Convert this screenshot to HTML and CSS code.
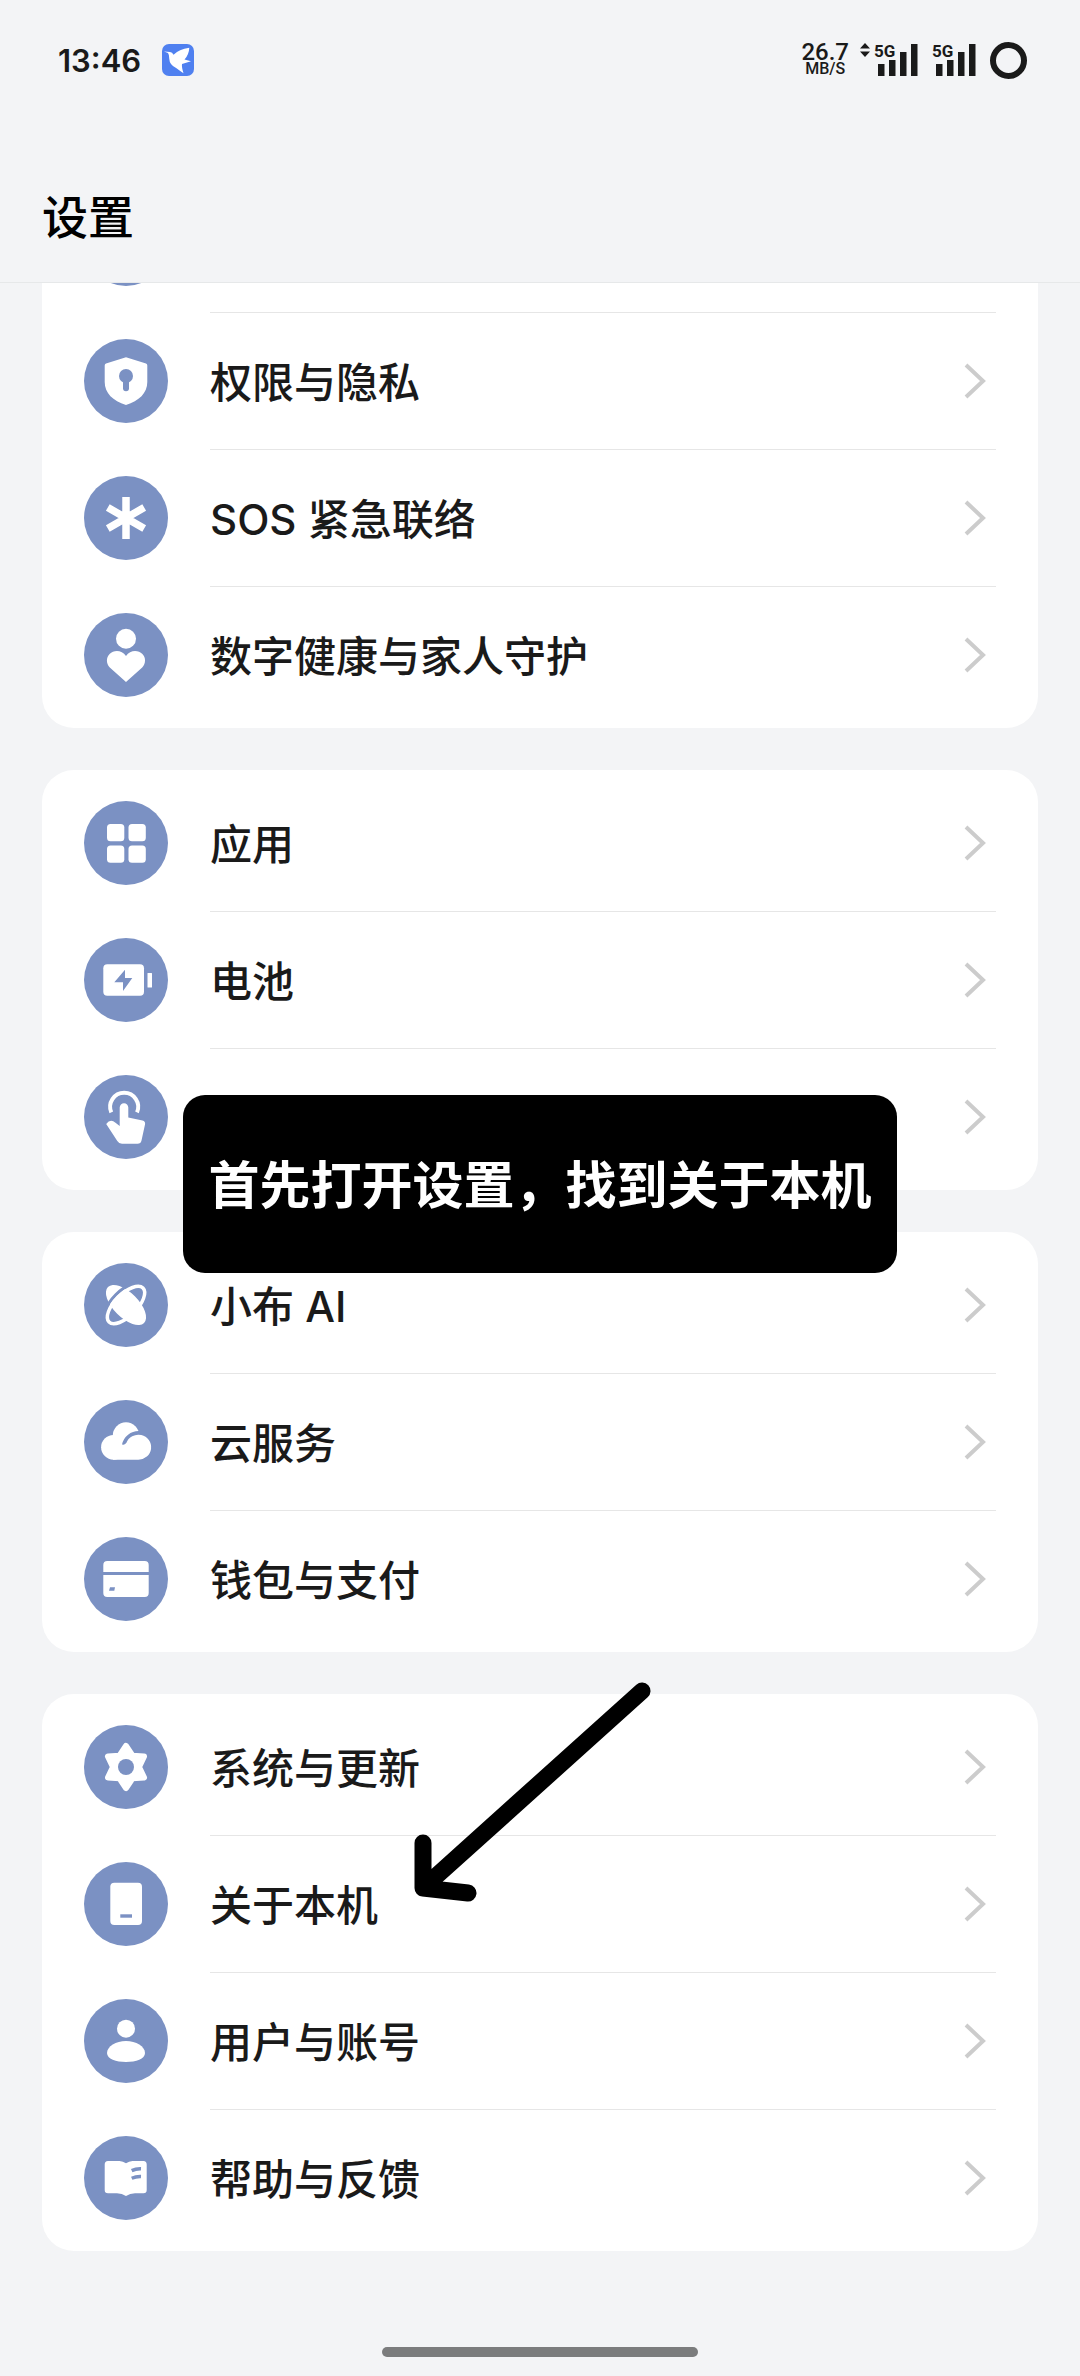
FILE: index.html
```html
<!DOCTYPE html>
<html lang="zh-CN">
<head>
    <meta charset="UTF-8">
    <meta name="viewport" content="width=device-width, initial-scale=1.0">
    <title>设置</title>
    <link rel="stylesheet" href="styles.css">
</head>
<body>
    <header class="header">
        <div class="status-bar">
            <div class="status-left">
                <span class="clock">13:46</span>
                <svg class="app-badge" viewBox="0 0 32 32">
                    <rect width="32" height="32" rx="7" fill="#4f80f0"/>
                    <path d="M2 7.4 8 8q2.4 0 3.5 2.8Q17 5 27.3 3.7 27 10.5 22.5 15.5L29 17.3 20 20Q19.5 23 21.5 29.3 18 27 14.5 24.3 7.5 21 7.3 15 7.3 10.5 6 9Z" fill="#fff"/>
                </svg>
            </div>
            <div class="status-right">
                <div class="speed">
                    <span class="speed-value">26.7</span>
                    <span class="speed-unit">MB/S</span>
                </div>
                <svg class="traffic" viewBox="0 0 10 14">
                    <path d="M5 0 10 5.5H0ZM5 14 0 8.5H10Z"/>
                </svg>
                <div class="signal">
                    <span class="signal-type">5G</span>
                    <svg class="signal-bars" viewBox="0 0 40 32">
                        <path d="M0 20h6.5v12H0zM11 16h6.5v16H11zM22 8h6.5v24H22zM33 0h6.5v32H33z"/>
                    </svg>
                </div>
                <div class="signal">
                    <span class="signal-type">5G</span>
                    <svg class="signal-bars" viewBox="0 0 40 32">
                        <path d="M0 20h6.5v12H0zM11 16h6.5v16H11zM22 8h6.5v24H22zM33 0h6.5v32H33z"/>
                    </svg>
                </div>
                <div class="battery-ring"></div>
            </div>
        </div>
        <h1 class="title">设置</h1>
    </header>

    <main class="list">
        <ul class="card">
            <li><a class="row" href="#">
                <span class="icon"></span>
                <span class="row-body"></span>
            </a></li>
            <li><a class="row" href="#">
                <svg class="icon" viewBox="0 0 84 84">
                    <path d="M42 18.3 62 24.6q1.3.4 1.3 1.8V43C63.3 54 55 62 42 66 29 62 20.7 54 20.7 43V26.4q0-1.4 1.3-1.8Z"/>
                    <circle class="cut" cx="42" cy="37" r="7"/>
                    <path class="cut-line" d="M42 40v9.2" stroke-width="6" stroke-linecap="round"/>
                </svg>
                <span class="row-body">权限与隐私 <svg class="chevron" viewBox="0 0 42 42"><path d="M12 5 29 21 12 37"/></svg></span>
            </a></li>
            <li><a class="row" href="#">
                <svg class="icon" viewBox="0 0 84 84">
                    <path class="line" stroke-width="7.5" d="M42 21v42M23.8 31.5l36.4 21M60.2 31.5l-36.4 21"/>
                </svg>
                <span class="row-body">SOS 紧急联络 <svg class="chevron" viewBox="0 0 42 42"><path d="M12 5 29 21 12 37"/></svg></span>
            </a></li>
            <li><a class="row" href="#">
                <svg class="icon" viewBox="0 0 84 84">
                    <circle cx="42" cy="25.7" r="10"/>
                    <path d="M42 69 25.8 54.5C22 50.5 22 44.5 25.6 41 30 36.6 38 37 42 43 46 37 54 36.6 58.4 41 62 44.5 62 50.5 58.2 54.5Z"/>
                </svg>
                <span class="row-body">数字健康与家人守护 <svg class="chevron" viewBox="0 0 42 42"><path d="M12 5 29 21 12 37"/></svg></span>
            </a></li>
        </ul>

        <ul class="card">
            <li><a class="row" href="#">
                <svg class="icon" viewBox="0 0 84 84">
                    <rect x="23" y="23" width="17.3" height="17.3" rx="3.5"/>
                    <rect x="44.5" y="23" width="17.3" height="17.3" rx="3.5"/>
                    <rect x="23" y="44.5" width="17.3" height="17.3" rx="3.5"/>
                    <rect x="44.5" y="44.5" width="17.3" height="17.3" rx="3.5"/>
                </svg>
                <span class="row-body">应用 <svg class="chevron" viewBox="0 0 42 42"><path d="M12 5 29 21 12 37"/></svg></span>
            </a></li>
            <li><a class="row" href="#">
                <svg class="icon" viewBox="0 0 84 84">
                    <rect x="19.3" y="26.3" width="40.7" height="31.4" rx="4"/>
                    <rect x="63.5" y="35" width="4.5" height="14.5" rx=".5"/>
                    <path class="cut" d="M41 31.7 30.3 44.3H39V53L48.3 40H41Z"/>
                </svg>
                <span class="row-body">电池 <svg class="chevron" viewBox="0 0 42 42"><path d="M12 5 29 21 12 37"/></svg></span>
            </a></li>
            <li><a class="row" href="#">
                <svg class="icon" viewBox="0 0 84 84">
                    <path class="line" stroke-width="4" d="M27.3 37.4A14 14 0 1 1 53 37.4"/>
                    <path d="M35.7 32.5a4.3 4.3 0 0 1 8.6 0V42.5L58.5 45.4Q61.7 46.2 61 49.5L57.5 65.5Q56.8 68.7 53.5 68.7H38Q34.8 68.7 33.3 66L22.2 49Q26.5 43 31.5 47.8L35.7 51Z"/>
                </svg>
                <span class="row-body"><svg class="chevron" viewBox="0 0 42 42"><path d="M12 5 29 21 12 37"/></svg></span>
            </a></li>
        </ul>

        <ul class="card">
            <li><a class="row" href="#">
                <svg class="icon" viewBox="0 0 84 84">
                    <g transform="rotate(45 42 42)">
                        <ellipse cx="42" cy="42" rx="25.5" ry="12.5"/>
                        <path class="cut-line" stroke-width="3" d="M42 15A14.5 27 0 0 0 42 69"/>
                        <ellipse class="line" cx="42" cy="42" rx="11" ry="24" stroke-width="3.5"/>
                    </g>
                </svg>
                <span class="row-body">小布 AI <svg class="chevron" viewBox="0 0 42 42"><path d="M12 5 29 21 12 37"/></svg></span>
            </a></li>
            <li><a class="row" href="#">
                <svg class="icon" viewBox="0 0 84 84">
                    <circle cx="42" cy="35.5" r="13.2"/>
                    <circle cx="29.5" cy="47.3" r="12.4"/>
                    <path class="cut" d="M38 44.5A17 17 0 0 1 55 31h5v14H41.5Q38.5 47 38 44.5Z"/>
                    <path d="M29 59.7V47L38.5 44.5Q40 45.5 42.3 43A12.8 12.5 0 1 1 54.3 59.7Z"/>
                </svg>
                <span class="row-body">云服务 <svg class="chevron" viewBox="0 0 42 42"><path d="M12 5 29 21 12 37"/></svg></span>
            </a></li>
            <li><a class="row" href="#">
                <svg class="icon" viewBox="0 0 84 84">
                    <path d="M19.3 35V28q0-4 4-4H60.7q4 0 4 4V35ZM19.3 38H64.7V56q0 4-4 4H23.3q-4 0-4-4Z"/>
                    <path class="cut" d="M26 50.3H31L30.3 53.7H25Z"/>
                </svg>
                <span class="row-body">钱包与支付 <svg class="chevron" viewBox="0 0 42 42"><path d="M12 5 29 21 12 37"/></svg></span>
            </a></li>
        </ul>

        <ul class="card">
            <li><a class="row" href="#">
                <svg class="icon" viewBox="0 0 84 84">
                    <path stroke="#fff" stroke-width="6" stroke-linejoin="round" d="M42 21 48.5 30.7 60 31.5 55 42 60 52.5 48.5 53.3 42 63 35.5 53.3 24 52.5 29 42 24 31.5 35.5 30.7Z"/>
                    <circle class="cut" cx="42" cy="42" r="8"/>
                </svg>
                <span class="row-body">系统与更新 <svg class="chevron" viewBox="0 0 42 42"><path d="M12 5 29 21 12 37"/></svg></span>
            </a></li>
            <li><a class="row" href="#">
                <svg class="icon" viewBox="0 0 84 84">
                    <rect x="26.3" y="20.7" width="31.7" height="42.3" rx="4"/>
                    <rect class="cut" x="36.3" y="52.3" width="11.7" height="3.4"/>
                </svg>
                <span class="row-body">关于本机 <svg class="chevron" viewBox="0 0 42 42"><path d="M12 5 29 21 12 37"/></svg></span>
            </a></li>
            <li><a class="row" href="#">
                <svg class="icon" viewBox="0 0 84 84">
                    <circle cx="42" cy="29.7" r="9"/>
                    <path d="M23 54C23 47.5 32 42 42 42S61 47.5 61 54C61 60 52 63 42 63S23 60 23 54Z"/>
                </svg>
                <span class="row-body">用户与账号 <svg class="chevron" viewBox="0 0 42 42"><path d="M12 5 29 21 12 37"/></svg></span>
            </a></li>
            <li><a class="row" href="#">
                <svg class="icon" viewBox="0 0 84 84">
                    <path d="M24 25H35.5Q39 25.3 42 27.3 45 25.3 48.5 25H59.5Q62.7 25 62.7 28.5V54Q62.7 57.2 59.5 57.2H51Q46 57.5 42 60 38 57.5 33 57.2H24Q20.7 57.2 20.7 54V28.5Q20.7 25 24 25Z"/>
                    <path class="cut-line" stroke-width="3.4" d="M47.7 34.6Q52 32.5 57 32.7M47.7 42.2Q52 40.3 57 40.5"/>
                </svg>
                <span class="row-body">帮助与反馈 <svg class="chevron" viewBox="0 0 42 42"><path d="M12 5 29 21 12 37"/></svg></span>
            </a></li>
        </ul>
    </main>

    <footer class="nav">
        <div class="nav-pill"></div>
    </footer>

    <div class="tip">首先打开设置，找到关于本机</div>
    <svg class="arrow" viewBox="0 0 236 220">
        <path d="M228 9 9 206M9 161V206L54 211"/>
    </svg>
</body>
</html>
```
FILE: styles.css
```css
* {
    box-sizing: border-box;
}
body {
    position: relative;
    display: flex;
    flex-direction: column;
    min-height: 100vh;
    margin: 0;
    background-color: #f3f4f6;
    color: #1a1a1a;
    font-family: Inter, "Noto Sans CJK SC", sans-serif;
}

/* header */
.header {
    position: relative;
    z-index: 1;
    background-color: #f3f4f6;
    border-bottom: 1px solid #e6e8e9;
}
.status-bar {
    display: flex;
    justify-content: space-between;
    align-items: center;
    height: 120px;
    padding: 0 53px 0 58px;
}
.status-left {
    display: flex;
    align-items: center;
    gap: 21px;
}
.clock {
    font-size: 31px;
    font-weight: 600;
}
.app-badge {
    width: 32px;
    height: 32px;
}
.status-right {
    display: flex;
    align-items: center;
}
.speed {
    display: flex;
    flex-direction: column;
    align-items: center;
    margin-right: 11px;
    font-family: Roboto, sans-serif;
    font-weight: 500;
}
.speed-value {
    font-size: 24px;
    line-height: 18px;
}
.speed-unit {
    font-size: 16px;
    line-height: 16px;
}
.traffic {
    width: 10px;
    height: 14px;
    margin-right: 4px;
    margin-bottom: 20px;
    fill: #1a1a1a;
}
.signal {
    position: relative;
    width: 44px;
    height: 32px;
    margin-right: 14px;
}
.signal-type {
    position: absolute;
    top: 0;
    left: 0;
    font-family: Roboto, sans-serif;
    font-size: 17px;
    font-weight: 700;
    line-height: 14px;
}
.signal-bars {
    display: block;
    width: 40px;
    height: 32px;
    margin-left: auto;
    fill: #1a1a1a;
}
.battery-ring {
    width: 37px;
    height: 37px;
    border: 6px solid #1a1a1a;
    border-radius: 50%;
}
.title {
    margin: 0;
    padding: 64px 42px 32px;
    color: #000;
    font-size: 46px;
    font-weight: 500;
    line-height: 66px;
}

/* settings list, scrolled so that the first row sits under the header */
.list {
    display: flex;
    flex-direction: column;
    gap: 42px;
    margin-top: -112px;
    padding: 0 42px;
}
.card {
    margin: 0;
    padding: 5px 42px;
    list-style: none;
    background-color: #fff;
    border-radius: 32px;
}
.row {
    display: flex;
    align-items: center;
    gap: 42px;
    color: inherit;
    text-decoration: none;
}
.icon {
    flex: none;
    width: 84px;
    height: 84px;
    border-radius: 50%;
    background-color: #7b91c3;
    fill: #fff;
}
.icon .cut {
    fill: #7b91c3;
}
.icon .line {
    fill: none;
    stroke: #fff;
}
.icon .cut-line {
    fill: none;
    stroke: #7b91c3;
}
.row-body {
    flex: 1;
    display: flex;
    justify-content: space-between;
    align-items: center;
    height: 136px;
    padding-top: 4px;
    font-size: 42px;
    font-weight: 500;
    line-height: 56px;
}
li + li .row-body {
    height: 137px;
    border-top: 1px solid #e6e6e6;
}
.chevron {
    width: 42px;
    height: 42px;
    margin-left: auto;
    margin-bottom: 4px;
    fill: none;
    stroke: #ccc;
    stroke-width: 4;
}

/* bottom gesture bar */
.nav {
    display: flex;
    justify-content: center;
    margin-top: auto;
    padding-bottom: 19px;
}
.nav-pill {
    width: 316px;
    height: 10px;
    border-radius: 5px;
    background-color: #7b7c7d;
}

/* annotations */
.tip {
    position: absolute;
    top: 1095px;
    left: 0;
    right: 0;
    z-index: 2;
    width: fit-content;
    margin: 0 auto;
    padding: 4px 25px 0;
    border-radius: 22px;
    background-color: #000;
    color: #fff;
    font-size: 51px;
    font-weight: 700;
    line-height: 174px;
    white-space: nowrap;
}
.arrow {
    position: absolute;
    top: 1682px;
    left: 414px;
    z-index: 2;
    width: 236px;
    height: 220px;
    overflow: visible;
    fill: none;
    stroke: #000;
    stroke-width: 17;
    stroke-linecap: round;
    stroke-linejoin: round;
}
```
